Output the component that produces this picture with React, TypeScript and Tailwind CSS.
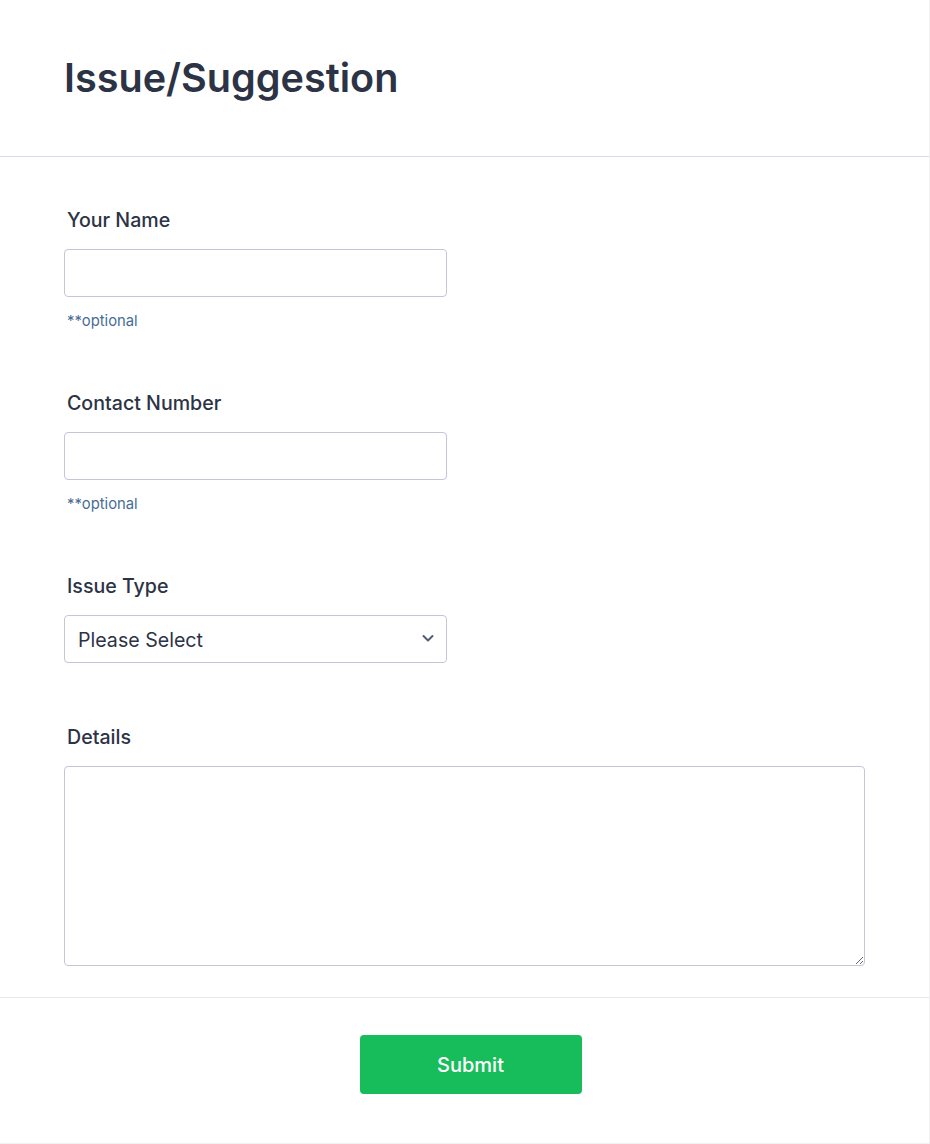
import { useState } from "react";

const font = { fontFamily: "Inter, 'Noto Sans', sans-serif" };

function Field({ label, optional, children }: { label: string; optional?: boolean; children: React.ReactNode }) {
  return (
    <div className="flex flex-col">
      <label className="pl-[3px] pt-px text-[19.6px] leading-6 font-medium text-[#2c3345]">{label}</label>
      <div className="mt-[17px]">{children}</div>
      {optional && (
        <span className="mt-[14px] pl-[3px] text-[14.8px] leading-5 text-[#476c96]">**optional</span>
      )}
    </div>
  );
}

export default function App() {
  const [form, setForm] = useState({ name: "", phone: "", type: "", details: "" });

  const inputCls =
    "w-[383px] h-12 px-3 rounded-[4px] border border-[#c4c6d8] bg-white text-[19.6px] text-[#2c3345] outline-none";

  return (
    <div className="min-h-screen bg-white" style={font}>
      <div className="w-[930px] border-r border-b border-[#f1f1f5]">
        <div className="px-16 py-[54px] border-b border-[#d8dae8]">
          <h1 className="text-[39.6px] leading-[48px] font-semibold text-[#2c3345]">Issue/Suggestion</h1>
        </div>

        <div className="px-16 pt-[50px] pb-[31px] border-b border-[#e6e7ef]">
          <Field label="Your Name" optional>
            <input
              className={inputCls}
              value={form.name}
              onChange={(e) => setForm({ ...form, name: e.target.value })}
            />
          </Field>

          <div className="mt-[59px]">
            <Field label="Contact Number" optional>
              <input
                className={inputCls}
                value={form.phone}
                onChange={(e) => setForm({ ...form, phone: e.target.value })}
              />
            </Field>
          </div>

          <div className="mt-[59px]">
            <Field label="Issue Type">
              <div className="relative w-[383px]">
                <select
                  className="w-full h-12 pl-[13px] pr-10 pt-[3px] rounded-[4px] border border-[#c4c6d8] bg-white text-[19.6px] text-[#2c3345] appearance-none outline-none"
                  value={form.type}
                  onChange={(e) => setForm({ ...form, type: e.target.value })}
                >
                  <option value="">Please Select</option>
                  <option value="issue">Issue</option>
                  <option value="suggestion">Suggestion</option>
                </select>
                <svg
                  className="absolute right-[13px] top-[19px] pointer-events-none"
                  width="12"
                  height="9"
                  viewBox="0 0 12 9"
                  fill="none"
                >
                  <path d="M1.5 2 L6 6.5 L10.5 2" stroke="#545c78" strokeWidth="2" strokeLinecap="round" strokeLinejoin="round" />
                </svg>
              </div>
            </Field>
          </div>

          <div className="mt-[61px]">
            <Field label="Details">
              <textarea
                className="block w-[801px] h-[200px] p-3 rounded-[4px] border border-[#c4c6d8] bg-white text-[19.6px] text-[#2c3345] outline-none"
                value={form.details}
                onChange={(e) => setForm({ ...form, details: e.target.value })}
              />
            </Field>
          </div>
        </div>

        <div className="flex justify-center pl-3 pt-[37px] pb-[49px]">
          <button className="w-[222px] h-[59px] rounded-[4px] bg-[#18bd5b] text-white text-[20px] font-medium">
            Submit
          </button>
        </div>
      </div>
    </div>
  );
}
